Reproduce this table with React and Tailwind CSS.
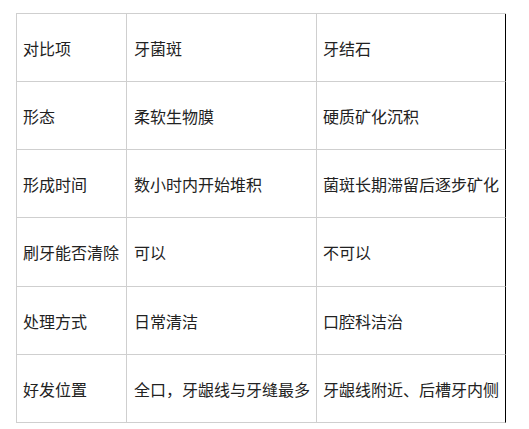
import React from "react";

const rows = [
  ["对比项", "牙菌斑", "牙结石"],
  ["形态", "柔软生物膜", "硬质矿化沉积"],
  ["形成时间", "数小时内开始堆积", "菌斑长期滞留后逐步矿化"],
  ["刷牙能否清除", "可以", "不可以"],
  ["处理方式", "日常清洁", "口腔科洁治"],
  ["好发位置", "全口，牙龈线与牙缝最多", "牙龈线附近、后槽牙内侧"],
];

const App = () => {
  return (
    <div className="w-[529px] h-[429px] bg-white pt-[13px] pl-[16px] font-['Microsoft_YaHei','Noto_Sans_CJK_SC',sans-serif] text-[16px] text-[#222]">
      <div className="w-[490px] border-l border-t border-[#cfcfcf]">
        {rows.map((row, i) => (
          <div key={i} className={`flex ${i === 3 ? "h-[69px]" : "h-[68px]"}`}>
            <div className="w-[110px] flex items-center pl-[6px] border-r border-b border-[#cfcfcf] whitespace-nowrap">
              {row[0]}
            </div>
            <div className="w-[190px] flex items-center pl-[7px] border-r border-b border-[#cfcfcf] whitespace-nowrap">
              {row[1]}
            </div>
            <div className="w-[189px] flex items-center pl-[6px] border-b border-[#cfcfcf] border-r border-r-black whitespace-nowrap">
              {row[2]}
            </div>
          </div>
        ))}
      </div>
    </div>
  );
};

export default App;
